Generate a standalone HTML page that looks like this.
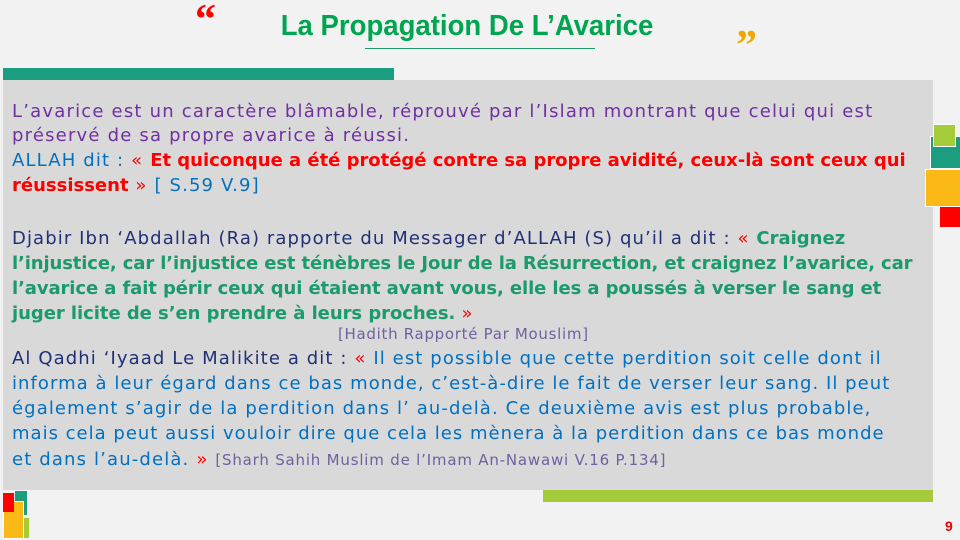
<!DOCTYPE html>
<html><head><meta charset="utf-8"><style>
body{margin:0;width:960px;height:540px;background:#f2f2f2;position:relative;overflow:hidden;font-family:"DejaVu Sans","Liberation Sans",sans-serif}
.a{position:absolute}
.l{position:absolute;left:12px;white-space:nowrap;font-size:18px;line-height:22px;letter-spacing:1.15px}
.b{font-weight:bold;letter-spacing:-0.1px}
.p{color:#7030a0}.bl{color:#0070c0}.r{color:#ff0000}.n{color:#1f3076}.g{color:#1b9a6c}.h{color:#7060a0}
</style></head><body>
<div class="a" style="left:195px;top:-4px;font:bold 42px 'Liberation Serif',serif;color:#f00">“</div>
<div class="a" style="left:736px;top:22px;font:bold 42px 'Liberation Serif',serif;color:#f0a800">”</div>
<div class="a" style="left:227px;top:10px;width:480px;text-align:center;font:bold 29px 'Liberation Sans',sans-serif;color:#00a550;transform:scaleX(0.95)">La Propagation De L’Avarice</div>
<div class="a" style="left:365px;top:48px;width:230px;height:1px;background:#1b9a6c"></div>
<div class="a" style="left:3px;top:68px;width:391px;height:12px;background:#1b9e80"></div>
<div class="a" style="left:3px;top:80px;width:930px;height:410px;background:#d9d9d9"></div>
<div class="a" style="left:543px;top:490px;width:390px;height:12px;background:#a4cc3a"></div>
<div class="a" style="left:930px;top:136px;width:30px;height:31px;background:#1b9e80;border:1px solid #fff"></div>
<div class="a" style="left:933px;top:124px;width:21px;height:21px;background:#a4cc3a;border:1px solid #fff"></div>
<div class="a" style="left:925px;top:169px;width:35px;height:36px;background:#fbb918;border:1px solid #fff"></div>
<div class="a" style="left:940px;top:207px;width:20px;height:20px;background:#f00"></div>
<div class="a" style="left:15px;top:491px;width:12px;height:24px;background:#1b9e80"></div>
<div class="a" style="left:22px;top:518px;width:7px;height:20px;background:#a4cc3a"></div>
<div class="a" style="left:3px;top:501px;width:19px;height:36px;background:#fbb918;border:1px solid #fff"></div>
<div class="a" style="left:3px;top:493px;width:11px;height:19px;background:#f00"></div>
<div class="a" style="left:945px;top:518px;font:bold 14px 'Liberation Sans',sans-serif;color:#e00">9</div>

<div class="l p" style="top:101px;letter-spacing:1.2px">L’avarice est un caractère blâmable, réprouvé par l’Islam montrant que celui qui est</div>
<div class="l p" style="top:125px;letter-spacing:1.2px">préservé de sa propre avarice à réussi.</div>
<div class="l bl" style="top:150px">ALLAH dit : <span class="r">« <b style="letter-spacing:-0.02px">Et quiconque a été protégé contre sa propre avidité, ceux-là sont ceux qui</b></span></div>
<div class="l r" style="top:175px"><b style="letter-spacing:0px">réussissent</b> » <span class="bl">[ S.59 V.9]</span></div>
<div class="l n" style="top:228px;letter-spacing:1.1px">Djabir Ibn ‘Abdallah (Ra) rapporte du Messager d’ALLAH (S) qu’il a dit : <span class="r">«</span> <b class="g" style="letter-spacing:0">Craignez</b></div>
<div class="l g b" style="top:253px;letter-spacing:-0.13px">l’injustice, car l’injustice est ténèbres le Jour de la Résurrection, et craignez l’avarice, car</div>
<div class="l g b" style="top:278px;letter-spacing:-0.1px">l’avarice a fait périr ceux qui étaient avant vous, elle les a poussés à verser le sang et</div>
<div class="l g b" style="top:303px;letter-spacing:-0.05px">juger licite de s’en prendre à leurs proches. <span class="r" style="font-weight:normal">»</span></div>
<div class="l h" style="top:323px;left:338px;font-size:15px;letter-spacing:0.7px">[Hadith Rapporté Par Mouslim]</div>
<div class="l n" style="top:348px;letter-spacing:1.1px">Al Qadhi ‘Iyaad Le Malikite a dit : <span class="r">«</span> <span class="bl">Il est possible que cette perdition soit celle dont il</span></div>
<div class="l bl" style="top:373px;letter-spacing:1.05px">informa à leur égard dans ce bas monde, c’est-à-dire le fait de verser leur sang. Il peut</div>
<div class="l bl" style="top:398px;letter-spacing:1.1px">également s’agir de la perdition dans l’ au-delà. Ce deuxième avis est plus probable,</div>
<div class="l bl" style="top:423px;letter-spacing:1.0px">mais cela peut aussi vouloir dire que cela les mènera à la perdition dans ce bas monde</div>
<div class="l bl" style="top:449px">et dans l’au-delà. <span class="r">»</span> <span class="h" style="font-size:15px;letter-spacing:0.8px">[Sharh Sahih Muslim de l’Imam An-Nawawi V.16 P.134]</span></div>
</body></html>
